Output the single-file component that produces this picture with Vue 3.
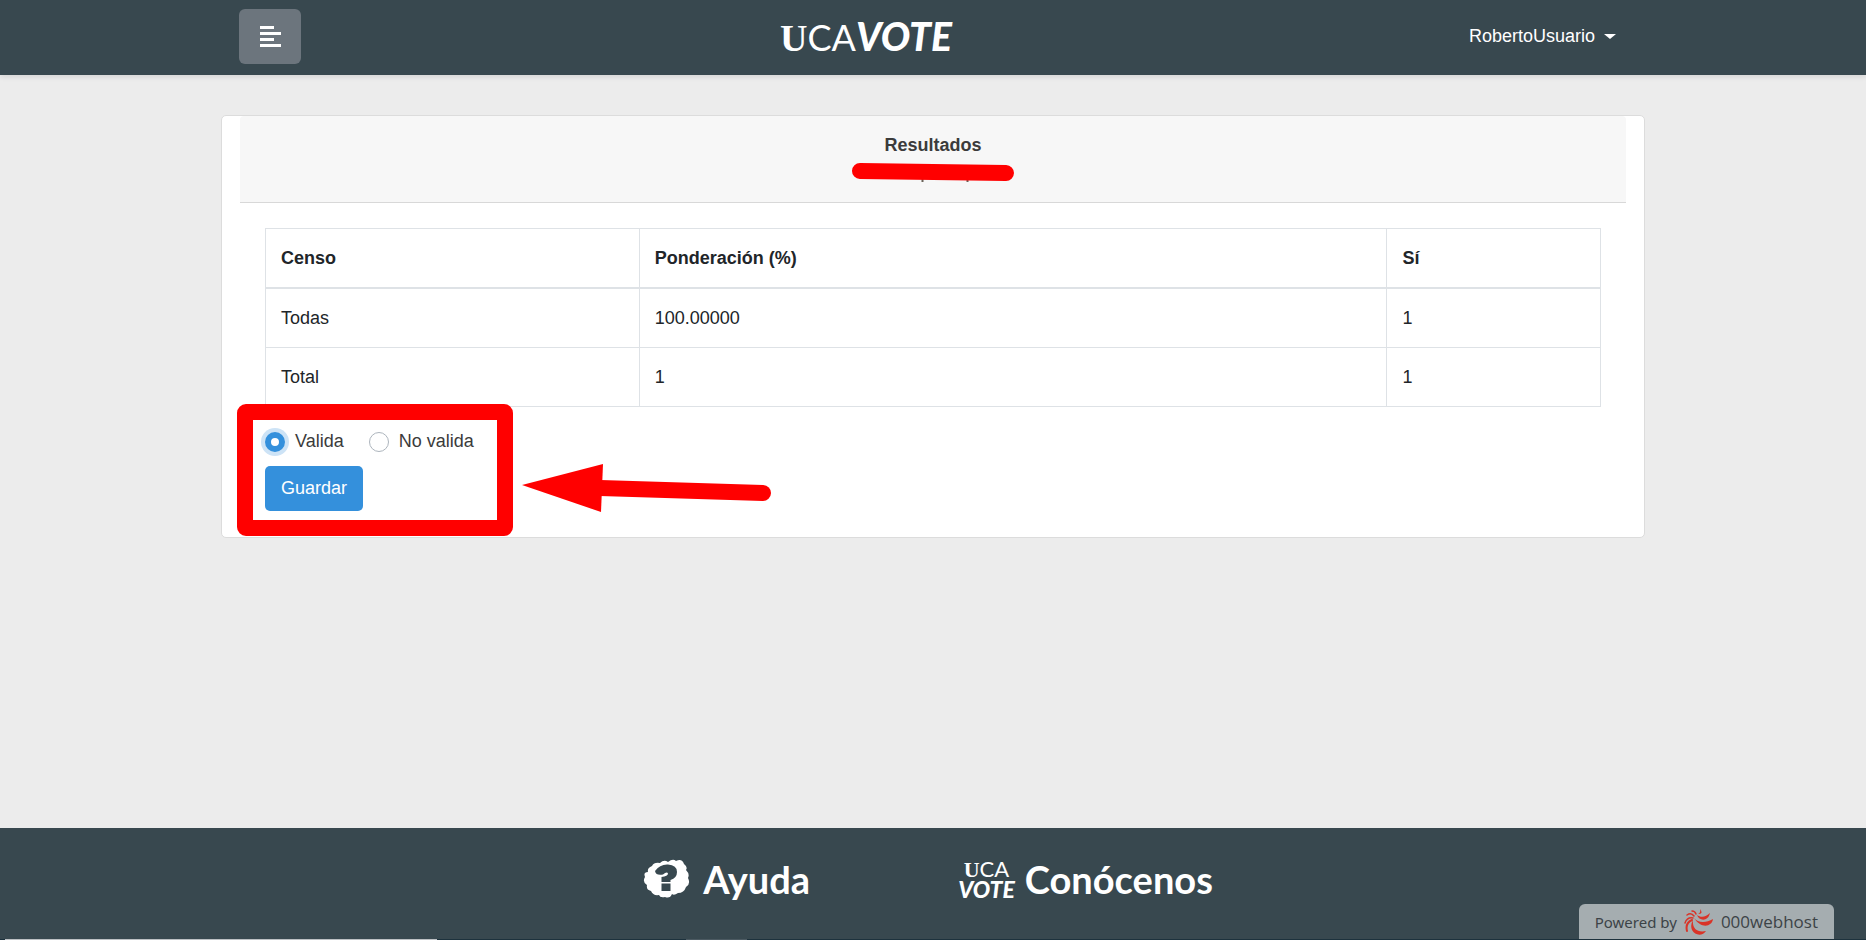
<script setup>
import { ref } from 'vue'

const choice = ref('valida')
const rows = [
  { name: 'Todas', weight: '100.00000', yes: '1' },
  { name: 'Total', weight: '1', yes: '1' },
]
</script>

<template>
  <div class="page">
    <header class="navbar">
      <div class="container nav-row">
        <button class="toggle" type="button" aria-label="Menú">
          <svg width="22" height="22" viewBox="0 0 22 22">
            <path d="M1 0h14v3H1zM1 6h21v3H1zM1 12h14v3H1zM1 18h21v3H1z" fill="#fff" />
          </svg>
        </button>
        <a class="logo" href="#">
          <span class="u">U</span><span class="ca">CA</span><span class="vote">VOTE</span>
        </a>
        <button class="user" type="button">
          RobertoUsuario
          <span class="caret"></span>
        </button>
      </div>
    </header>

    <main class="container">
      <section class="card">
        <div class="card-header">
          <h1>Resultados</h1>
          <svg class="underline" width="164" height="22" viewBox="0 0 164 22">
            <path d="M71.500 14v6M116.500 14v6" stroke="#6a6259" stroke-width="2" />
            <path d="M9 9L155 11" stroke="#f00" stroke-width="16" stroke-linecap="round" />
          </svg>
        </div>
        <div class="card-body">
          <table>
            <colgroup>
              <col class="c1" /><col class="c2" /><col class="c3" />
            </colgroup>
            <thead>
              <tr><th>Censo</th><th>Ponderación (%)</th><th>Sí</th></tr>
            </thead>
            <tbody>
              <tr v-for="r in rows" :key="r.name">
                <td>{{ r.name }}</td><td>{{ r.weight }}</td><td>{{ r.yes }}</td>
              </tr>
            </tbody>
          </table>
          <form class="form" @submit.prevent>
            <div class="options">
              <label><input v-model="choice" type="radio" name="estado" value="valida" />Valida</label>
              <label><input v-model="choice" type="radio" name="estado" value="no-valida" />No valida</label>
            </div>
            <button class="save" type="submit">Guardar</button>
            <div class="frame"></div>
            <svg class="arrow" width="252" height="50" viewBox="0 0 252 50">
              <path d="M78 25L241 30" stroke="#f00" stroke-width="16" stroke-linecap="round" />
              <path d="M0 22L81 1L79 49Z" fill="#f00" />
            </svg>
          </form>
        </div>
      </section>
    </main>

    <footer>
      <div class="links">
        <a href="#" class="help">
          <svg width="48" height="40" viewBox="0 0 48 40">
            <path d="M9 7Q11 3 17 4Q21 0 25 3Q30-1 33 2Q39-1 41 5Q45 8 43 11Q47 15 45 19Q48 25 43 28Q41 34 35 34Q31 37 29 35Q27 40 22 38Q17 39 16 36Q10 37 8 32Q3 31 4 26Q-1 23 2 18Q0 13 5 13Q4 9 9 7Z" fill="#fff" />
            <path d="M12 12Q17 5 25 5.500Q34 6 34 13Q34 19 27.500 21V23H18.500V18Q25 17 25 14.500Q24 12 20 15.500Q13 17 12 12ZM18.500 24.500H27.500V32H18.500Z" fill="#38484f" />
          </svg>
          <span>Ayuda</span>
        </a>
        <a href="#" class="about">
          <span class="mini">
            <span class="mini-top"><span class="mini-u">U</span>CA</span>
            <span class="mini-vote">VOTE</span>
          </span>
          <span>Conócenos</span>
        </a>
      </div>
      <div class="strip"><i class="seg long"></i><i class="seg short"></i></div>
    </footer>

    <a class="badge" href="#">
      <span>Powered by</span>
      <svg width="30" height="26" viewBox="0 0 30 26">
        <g fill="#d93428">
          <path d="M9 11C8 19 13 24 22 22C19 27 11 27 8 21Q6 16 9 11Z" />
          <path d="M10 9C14 14 22 14 29 10C28 18 17 20 10 9Z" />
          <path d="M13 6C17 9 22 8 26 4C24 13 15 12 13 6Z" />
          <path d="M14 5Q17 4 16 0Q20 5 14 5Z" />
        </g>
        <g fill="none" stroke="#d93428" stroke-linecap="round">
          <path d="M8 11Q1 14 3 22" stroke-width="2" />
          <path d="M9 9Q3 8 1 14M10 7Q7 3 3 6M12 5Q11 2 8 2" stroke-width="1.500" />
        </g>
      </svg>
      <span class="host">000webhost</span>
    </a>
  </div>
</template>

<style>
body {
  margin: 0;
}
</style>

<style scoped>
* {
  box-sizing: border-box;
}
.page {
  min-height: 100vh;
  display: flex;
  flex-direction: column;
  background: #ececec;
  color: #212529;
  font: 18px/29px "Liberation Sans", Arial, sans-serif;
}
a {
  color: #fff;
  text-decoration: none;
}
button {
  font: inherit;
  color: #fff;
  border: 0;
  cursor: pointer;
}
.container {
  width: 100%;
  max-width: 1424px;
  margin: 0 auto;
}
.navbar {
  background: #38484f;
  box-shadow: 0 2px 5px rgba(0, 0, 0, 0.1);
}
.nav-row {
  height: 75px;
  padding: 0 18px 2px;
  display: flex;
  align-items: center;
  justify-content: space-between;
}
.toggle {
  width: 62px;
  height: 55px;
  padding: 0;
  border-radius: 6px;
  background: #6c757d;
  display: grid;
  place-items: center;
}
.logo {
  display: flex;
  align-items: baseline;
  line-height: 52px;
  padding-right: 38px;
}
.u {
  font-family: "Liberation Serif", serif;
  font-weight: 700;
  font-size: 38px;
}
.ca {
  font-family: Lato, sans-serif;
  font-size: 36px;
}
.vote {
  font-family: Lato, sans-serif;
  font-weight: 900;
  font-style: italic;
  font-size: 39px;
}
.user {
  background: none;
  padding: 0 11px 0 0;
  display: flex;
  align-items: center;
  gap: 9px;
}
.caret {
  border: 6px solid transparent;
  border-top: 5px solid #fff;
  border-bottom: 0;
}
main {
  flex: 1;
  padding: 40px 0;
}
.card {
  background: #fff;
  border: 1px solid #dcdcdc;
  border-radius: 5px;
  padding: 0 18px;
}
.card-header {
  position: relative;
  height: 87px;
  padding: 15px 25px;
  background: #f7f7f7;
  border-bottom: 1px solid #d8d8d8;
  border-radius: 4px 4px 0 0;
  text-align: center;
}
h1 {
  margin: 0;
  font-size: 18px;
  line-height: 29px;
  color: #3b3b3b;
}
.underline {
  position: absolute;
  left: 50%;
  top: 46px;
  margin-left: -82px;
}
.card-body {
  padding: 25px 25px 26px;
}
table {
  width: 100%;
  table-layout: fixed;
  border-collapse: collapse;
  line-height: 28px;
}
.c1 {
  width: 28%;
}
.c2 {
  width: 56%;
}
th,
td {
  border: 1px solid #dee2e6;
  padding: 15px;
  text-align: left;
}
th {
  border-bottom-width: 2px;
}
.form {
  position: relative;
  padding-top: 20px;
}
.options {
  display: flex;
  gap: 25px;
  margin-bottom: 10px;
  color: #3b3b3b;
}
label {
  display: flex;
  align-items: center;
  gap: 10px;
}
input {
  appearance: none;
  width: 20px;
  height: 20px;
  margin: 0;
  border: 1px solid #adb5bd;
  border-radius: 50%;
  background: #fff;
}
input:checked {
  border: 6px solid #3490dc;
  box-shadow: 0 0 0 4px #cde3f6;
}
.save {
  display: block;
  height: 45px;
  padding: 0 16px;
  border-radius: 5px;
  background: #3490dc;
}
.frame {
  position: absolute;
  left: -28px;
  top: -3px;
  width: 276px;
  height: 132px;
  border: 16px solid #f00;
  border-radius: 9px;
  pointer-events: none;
}
.arrow {
  position: absolute;
  left: 257px;
  top: 56px;
}
footer {
  background: #38484f;
}
.links {
  height: 111px;
  padding: 0 10px 9px 0;
  display: flex;
  justify-content: center;
  align-items: center;
  gap: 148px;
  font: 700 38px/48px Lato, sans-serif;
}
.links a {
  display: flex;
  align-items: center;
}
.help {
  gap: 12px;
}
.about {
  gap: 10px;
}
.mini {
  display: flex;
  flex-direction: column;
  align-items: center;
}
.mini-top {
  font: 400 22px/18px Lato, sans-serif;
}
.mini-u {
  font-family: "Liberation Serif", serif;
  font-weight: 700;
}
.mini-vote {
  font: italic 900 23px/20px Lato, sans-serif;
}
.strip {
  display: flex;
  height: 1px;
  padding-left: 5px;
  gap: 249px;
  background: #1d323d;
}
.seg {
  background: #bdc1c4;
}
.long {
  width: 432px;
}
.short {
  width: 61px;
  background: #4c5a62;
}
.badge {
  position: fixed;
  right: 32px;
  bottom: 1px;
  height: 35px;
  padding: 0 16px;
  display: flex;
  align-items: center;
  gap: 7px;
  border-radius: 6px 6px 0 0;
  background: #a5adb0;
  color: #3c4347;
  font: 15px/24px "Noto Sans", sans-serif;
}
.host {
  font-family: "Open Sans", sans-serif;
  font-weight: 500;
  font-size: 17px;
}
</style>
